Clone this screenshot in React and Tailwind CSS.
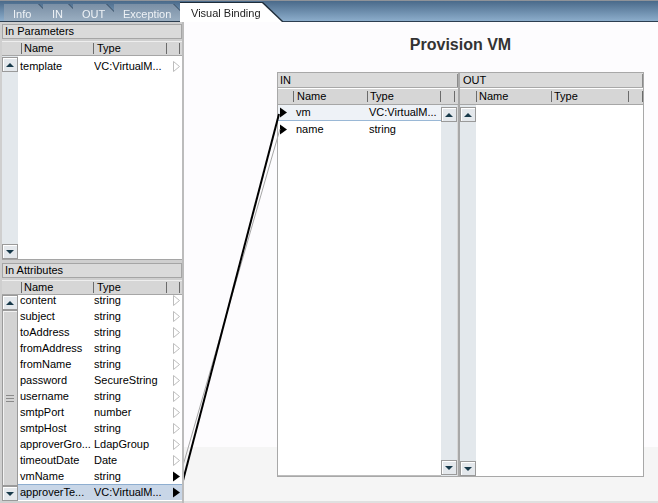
import React from "react";

function Sep() {
  return <div className="w-px h-[11px] bg-[#6b6b6b] shrink-0" />;
}

function ArrowBtn({ up }) {
  return (
    <div className="w-[16px] h-[15px] bg-[#e4e8ec] border border-[#9a9a9a] shadow-[inset_1px_1px_0_#ffffff] flex items-center justify-center shrink-0">
      {up ? (
        <div className="w-0 h-0 border-x-[4px] border-x-transparent border-b-[4px] border-b-[#17394a]" />
      ) : (
        <div className="w-0 h-0 border-x-[4px] border-x-transparent border-t-[4px] border-t-[#17394a]" />
      )}
    </div>
  );
}

function TriOutline() {
  return (
    <svg width="7" height="11" viewBox="0 0 7 11" className="shrink-0">
      <path d="M0.5 0.5 L6.5 5.5 L0.5 10.5 Z" fill="#ffffff" stroke="#bdbdbd" strokeWidth="1" />
    </svg>
  );
}

function TriSolid() {
  return (
    <svg width="7" height="11" viewBox="0 0 7 11" className="shrink-0">
      <path d="M0 0.5 L7 5.5 L0 10.5 Z" fill="#000000" />
    </svg>
  );
}

function LeftHeader() {
  return (
    <div className="h-[15px] shrink-0 flex items-center bg-[#d6d6d6] border-t border-t-[#eeeeee] border-b border-b-[#a6a6a6]">
      <div className="w-[19px]" />
      <Sep />
      <div className="w-[71px] pl-[2px] leading-[13px]">Name</div>
      <Sep />
      <div className="w-[72px] pl-[3px] leading-[13px]">Type</div>
      <Sep />
      <div className="w-[12px]" />
      <Sep />
    </div>
  );
}

function LRow({ name, type, tri, sel }) {
  return (
    <div
      className={
        "h-[16px] flex items-center whitespace-nowrap " +
        (sel ? "bg-[#c8d6e7] shadow-[inset_0_1px_0_#8eaed0]" : "")
      }
    >
      <div className="w-[76px] pl-[2px] overflow-hidden">{name}</div>
      <div className="w-[79px] overflow-hidden">{type}</div>
      {tri === 0 ? <TriOutline /> : <TriSolid />}
    </div>
  );
}

const attrs = [
  ["content", "string", 0],
  ["subject", "string", 0],
  ["toAddress", "string", 0],
  ["fromAddress", "string", 0],
  ["fromName", "string", 0],
  ["password", "SecureString", 0],
  ["username", "string", 0],
  ["smtpPort", "number", 0],
  ["smtpHost", "string", 0],
  ["approverGro...", "LdapGroup", 0],
  ["timeoutDate", "Date", 0],
  ["vmName", "string", 1],
  ["approverTe...", "VC:VirtualM...", 1, true],
];

function LeftPanel() {
  return (
    <div className="w-[184px] shrink-0 flex flex-col bg-[#cfcfcf] border-r-2 border-r-[#bcbcbc] relative z-10 pl-[2px]">
      <div className="h-[238px] shrink-0 flex flex-col pt-[2px]">
        <div className="h-[15px] shrink-0 bg-[#dadada] border border-[#a5a5a5] pl-[2px] leading-[13px]">
          In Parameters
        </div>
        <div className="mt-[2px] flex-1 min-h-0 flex flex-col bg-white border-b border-[#a5a5a5]">
          <LeftHeader />
          <div className="flex-1 flex min-h-0">
            <div className="w-[16px] bg-[#e3e8ec] flex flex-col justify-between pt-px">
              <ArrowBtn up />
              <ArrowBtn />
            </div>
            <div className="flex-1 pt-[2px]">
              <LRow name="template" type="VC:VirtualM..." tri={0} />
            </div>
          </div>
        </div>
      </div>
      <div className="h-[2px] shrink-0" />
      <div className="flex-1 min-h-0 flex flex-col pt-px pb-[2px]">
        <div className="h-[15px] shrink-0 bg-[#dadada] border border-[#a5a5a5] pl-[2px] leading-[13px]">
          In Attributes
        </div>
        <div className="mt-[2px] flex-1 min-h-0 flex flex-col bg-white">
          <LeftHeader />
          <div className="flex-1 flex min-h-0">
            <div className="w-[16px] bg-[#e3e8ec] flex flex-col">
              <ArrowBtn up />
              <div className="flex-1 bg-[#d3d3d3] border border-[#9a9a9a] shadow-[inset_1px_1px_0_#f2f2f2] flex flex-col items-center justify-center gap-[2px]">
                <div className="w-[8px] h-px bg-[#8a8a8a]" />
                <div className="w-[8px] h-px bg-[#8a8a8a]" />
                <div className="w-[8px] h-px bg-[#8a8a8a]" />
              </div>
              <ArrowBtn />
            </div>
            <div className="flex-1 overflow-hidden">
              <div className="-mt-[3px]">
                {attrs.map((a) => (
                  <LRow key={a[0]} name={a[0]} type={a[1]} tri={a[2]} sel={a[3]} />
                ))}
              </div>
            </div>
          </div>
        </div>
      </div>
    </div>
  );
}

function InBox() {
  return (
    <div className="w-[182px] h-[405px] border border-[#a8a8a8] flex flex-col bg-white">
      <div className="h-[15px] shrink-0 bg-[#dadada] border-b border-[#a8a8a8] pl-[2px] leading-[14px] flex items-center justify-between">
        <span>IN</span>
        <div className="w-px h-[13px] bg-[#8a8a8a]" />
      </div>
      <div className="h-[16px] mt-px shrink-0 flex items-center bg-[#d6d6d6] border-b border-[#a6a6a6]">
        <div className="w-[15px]" />
        <Sep />
        <div className="w-[73px] pl-[3px] leading-[13px]">Name</div>
        <Sep />
        <div className="w-[72px] pl-[2px] leading-[13px]">Type</div>
        <Sep />
        <div className="w-[13px]" />
        <Sep />
      </div>
      <div className="flex-1 min-h-0 flex">
        <div className="flex-1 border-b border-[#bdbdbd]">
          <div className="h-[16px] flex items-center whitespace-nowrap bg-[#eef2f7] border-b border-[#9ab8d6]">
            <div className="w-[16px] pl-[2px] flex items-center"><TriSolid /></div>
            <div className="w-[73px] pl-[2px]">vm</div>
            <div className="pl-[2px]">VC:VirtualM...</div>
          </div>
          <div className="h-[16px] flex items-center whitespace-nowrap">
            <div className="w-[16px] pl-[2px] flex items-center"><TriSolid /></div>
            <div className="w-[73px] pl-[2px]">name</div>
            <div className="pl-[2px]">string</div>
          </div>
        </div>
        <div className="w-[16px] bg-[#e3e8ec] flex flex-col justify-between pt-[2px] pb-[1px]">
          <ArrowBtn up />
          <ArrowBtn />
        </div>
        <div className="w-px bg-[#d8d8d8]" />
      </div>
    </div>
  );
}

function OutBox() {
  return (
    <div className="w-[185px] h-[405px] border border-[#a8a8a8] flex flex-col bg-white">
      <div className="h-[15px] shrink-0 bg-[#dadada] border-b border-[#a8a8a8] pl-[3px] leading-[14px] flex items-center justify-between">
        <span>OUT</span>
        <div className="w-px h-[13px] bg-[#8a8a8a]" />
      </div>
      <div className="h-[16px] mt-px shrink-0 flex items-center bg-[#d6d6d6] border-b border-[#a6a6a6]">
        <div className="w-[16px]" />
        <Sep />
        <div className="w-[74px] pl-[2px] leading-[13px]">Name</div>
        <Sep />
        <div className="w-[76px] pl-[2px] leading-[13px]">Type</div>
        <Sep />
        <div className="w-[13px]" />
        <Sep />
      </div>
      <div className="flex-1 min-h-0 flex">
        <div className="w-[16px] bg-[#e3e8ec] flex flex-col justify-between pt-[2px]">
          <ArrowBtn up />
          <ArrowBtn />
        </div>
        <div className="flex-1" />
      </div>
    </div>
  );
}

function TabBar() {
  return (
    <div className="h-[22px] shrink-0 border-t border-t-[#8f9399] border-b border-b-[#2c3e50] bg-[linear-gradient(to_bottom,#4a6a8a,#8cadcb)] flex items-end pl-[4px]">
      <div className="[filter:drop-shadow(1px_0_0_#34495e)] h-[17px] w-[51px] -mr-[12px]">
        <div className="h-full bg-[linear-gradient(to_bottom,#7a8fa5,#9aaec1)] [clip-path:polygon(0_0,calc(100%-17px)_0,100%_100%,0_100%)] text-[#eef2f6] pl-[9px] pt-[4px] leading-[13px]">
          Info
        </div>
      </div>
      <div className="[filter:drop-shadow(1px_0_0_#34495e)] h-[17px] w-[42px] -mr-[12px]">
        <div className="h-full bg-[linear-gradient(to_bottom,#7a8fa5,#9aaec1)] [clip-path:polygon(0_0,calc(100%-17px)_0,100%_100%,0_100%)] text-[#eef2f6] pl-[9px] pt-[4px] leading-[13px]">
          IN
        </div>
      </div>
      <div className="[filter:drop-shadow(1px_0_0_#34495e)] h-[17px] w-[50px] -mr-[9px]">
        <div className="h-full bg-[linear-gradient(to_bottom,#7a8fa5,#9aaec1)] [clip-path:polygon(0_0,calc(100%-17px)_0,100%_100%,0_100%)] text-[#eef2f6] pl-[9px] pt-[4px] leading-[13px]">
          OUT
        </div>
      </div>
      <div className="[filter:drop-shadow(1px_0_0_#34495e)] h-[17px] w-[76px] -mr-[10px]">
        <div className="h-full bg-[linear-gradient(to_bottom,#7a8fa5,#9aaec1)] [clip-path:polygon(0_0,calc(100%-17px)_0,100%_100%,0_100%)] text-[#eef2f6] pl-[9px] pt-[4px] leading-[13px]">
          Exception
        </div>
      </div>
      <div className="[filter:drop-shadow(1px_0_0_#1f2d3a)_drop-shadow(0_-1px_0_#1f2d3a)] h-[19px] w-[102px] -mb-px relative z-10">
        <div className="h-full bg-white [clip-path:polygon(0_0,calc(100%-20px)_0,100%_100%,0_100%)] text-[#222] pl-[11px] pt-[4px] leading-[13px]">
          Visual Binding
        </div>
      </div>
    </div>
  );
}

export default function App() {
  return (
    <div className="w-[658px] h-[503px] relative overflow-hidden flex flex-col bg-white text-[11px] text-black font-['Liberation_Sans',Arial,sans-serif]">
      <TabBar />
      <div className="flex-1 min-h-0 flex">
        <LeftPanel />
        <div className="flex-1 flex flex-col pl-[93px] pr-[14px] bg-[linear-gradient(to_bottom,#fdfcfe_425px,#f5f5f5_425px)] border-b-2 border-b-[#e0e0e0]">
          <div className="h-[50px] shrink-0 pt-[14px] text-center text-[16px] leading-[18px] font-bold text-[#333]">
            Provision VM
          </div>
          <div className="flex h-[405px] shrink-0">
            <InBox />
            <OutBox />
          </div>
        </div>
      </div>
      <svg className="absolute left-0 top-0 z-[5] pointer-events-none" width="658" height="503">
        <line x1="180" y1="476" x2="280" y2="129" stroke="#a6a6a6" strokeWidth="1" />
        <line x1="180" y1="492" x2="279" y2="114" stroke="#000" strokeWidth="2" />
      </svg>
    </div>
  );
}
